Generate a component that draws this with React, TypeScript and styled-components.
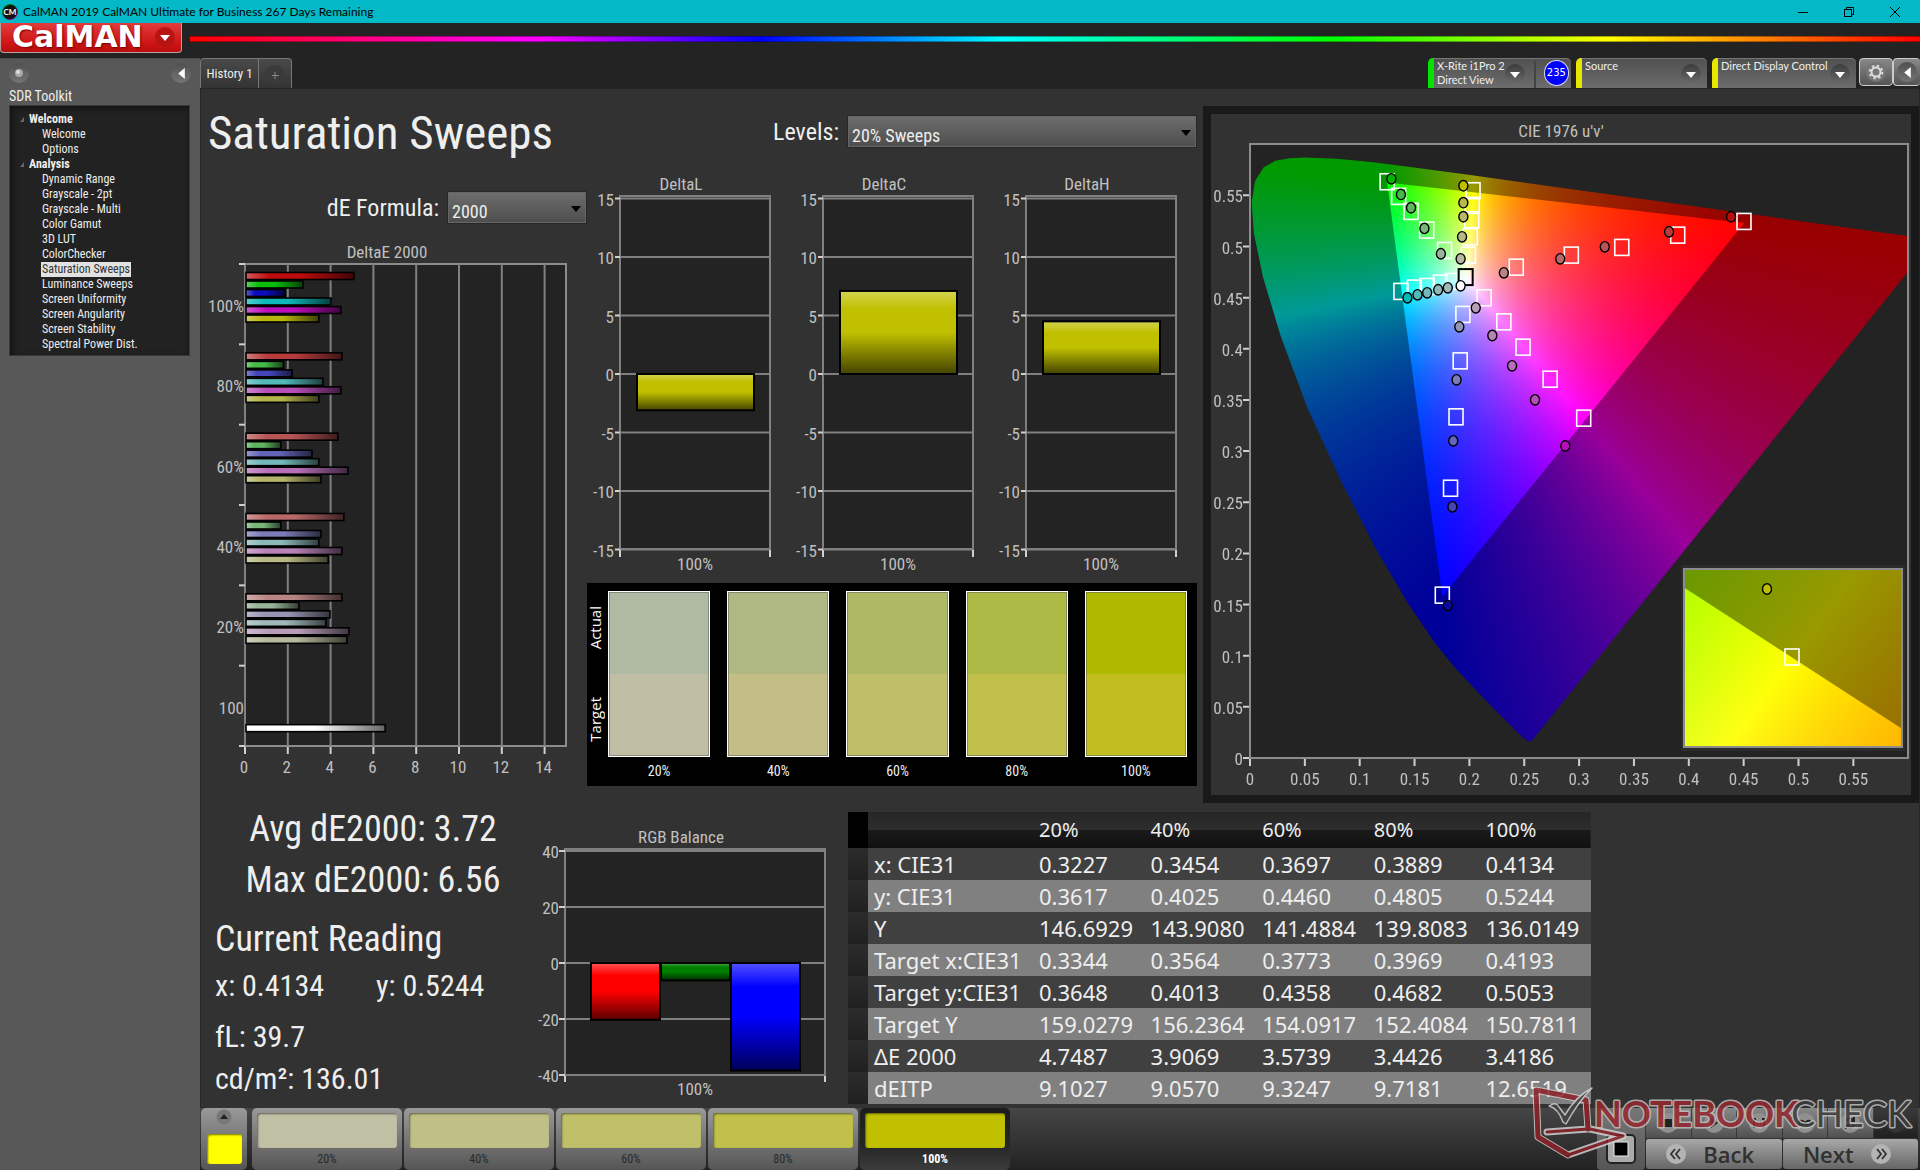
import React, { useEffect, useRef } from 'react';
import styled, { createGlobalStyle, css } from 'styled-components';

const narrow = `'Roboto Condensed', Roboto, 'Open Sans', sans-serif`;
const wide = `'Noto Sans', 'Open Sans', sans-serif`;
const lato = `Lato, 'Open Sans', sans-serif`;

const GlobalStyle = createGlobalStyle`
  *, *::before, *::after { box-sizing: border-box; }
  body { margin: 0; background: #232323; color: #eee; font-family: ${narrow}; }
  button, select { font: inherit; color: inherit; margin: 0; }
  h1, h2, ul, dl, dd, p { margin: 0; padding: 0; }
  ul { list-style: none; }
`;

/* ---------- shell ---------- */

const Shell = styled.div`
  display: flex;
  flex-direction: column;
  min-height: 100vh;
  position: relative;
  overflow: hidden;
`;

const TitleBar = styled.header`
  display: flex;
  align-items: center;
  gap: 5px;
  height: 23px;
  padding: 0 7px 0 2px;
  background: #03b8c7;
  color: #000;
  font: 12px/23px ${lato};
`;

const WindowButtons = styled.div`
  display: flex;
  margin-left: auto;
  gap: 10px;
`;

const WindowButton = styled.button`
  width: 36px;
  height: 22px;
  padding: 0;
  border: 0;
  background: none;
  display: grid;
  place-items: center;
`;

const Brand = styled.div`
  display: flex;
  align-items: center;
  gap: 8px;
  height: 35px;
  padding-bottom: 5px;
`;

const LogoButton = styled.button`
  display: flex;
  align-items: center;
  justify-content: space-between;
  width: 182px;
  height: 30px;
  padding: 0 6px 2px 11px;
  border: 1px solid #b9a0a0;
  border-top: 0;
  border-radius: 0 0 4px 4px;
  background: linear-gradient(#e23c3c, #cf1414 70%, #b80e0e);
  color: #fff;
  font: bold 30px/28px 'DejaVu Sans', sans-serif;
  text-shadow: 1px 1px 2px #700;
`;

const Badge = styled.span`
  display: grid;
  place-items: center;
  width: 20px;
  height: 20px;
  border-radius: 50%;
  background: #b81414;
`;

const Spectrum = styled.div`
  flex: 1;
  height: 6px;
  margin-top: 1px;
  border: 1px solid rgba(0, 0, 0, 0.35);
  border-width: 1px 0;
  background: linear-gradient(90deg, #f00 0%, #f0f 20%, #00f 33%, #0ff 47%, #0f0 66%, #ff0 82%, #f00 100%);
`;

const Columns = styled.div`
  display: flex;
  flex: 1;
`;

/* ---------- sidebar ---------- */

const Sidebar = styled.aside`
  width: 200px;
  flex: none;
  padding: 4px 9px 0;
  background: #585858;
  border-top: 1px solid #4a4a4a;
`;

const SidebarTop = styled.div`
  display: flex;
  justify-content: space-between;
  height: 22px;
`;

const RoundButton = styled.button<{ $size?: number; $dark?: boolean }>`
  width: ${p => p.$size ?? 20}px;
  height: ${p => p.$size ?? 20}px;
  flex: none;
  padding: 0;
  border: 0;
  border-radius: 50%;
  display: grid;
  place-items: center;
  background: ${p => (p.$dark ? 'linear-gradient(#3c3c3c, #6a6a6a)' : 'linear-gradient(#505050, #757575)')};
`;

const SidebarTitle = styled.h2`
  font: 14px/18px ${narrow};
  margin: 2px 0 0;
`;

const Tree = styled.nav`
  width: 181px;
  height: 251px;
  padding: 6px 0 0 10px;
  background: #222;
  border: 1px solid #3a3a3a;
  box-shadow: inset 2px 2px 6px #111;
  font-size: 12px;
  line-height: 15px;
`;

const TreeGroup = styled.div`
  font-weight: bold;
  display: flex;
  align-items: center;
  gap: 5px;
`;

const TreeItem = styled.a<{ $active?: boolean }>`
  display: block;
  width: fit-content;
  margin-left: 21px;
  padding: 0 1px;
  color: #eee;
  text-decoration: none;
  ${p => p.$active && css`
    background: #e2e2e2;
    color: #333;
  `}
`;

/* ---------- workspace ---------- */

const Work = styled.div`
  flex: 1;
  min-width: 0;
  display: flex;
  flex-direction: column;
`;

const TabBar = styled.div`
  display: flex;
  align-items: flex-end;
  height: 30px;
`;

const Tabs = styled.div`
  display: flex;
  height: 30px;
  border: 1px solid #777;
  border-bottom: 0;
  border-radius: 4px 4px 0 0;
  background: linear-gradient(#4a4a4a, #333);
`;

const Tab = styled.button`
  width: 58px;
  padding: 0;
  border: 0;
  border-right: 1px solid #777;
  background: none;
  font-size: 13px;
  white-space: nowrap;
`;

const AddTab = styled.button`
  width: 32px;
  padding: 2px 0 0;
  border: 0;
  background: none;
  display: grid;
  place-items: center;
`;

const Devices = styled.div`
  display: flex;
  margin-left: auto;
  gap: 5px;
  height: 30px;
`;

const Device = styled.div<{ $width: number; $accent: string }>`
  display: flex;
  align-items: flex-start;
  width: ${p => p.$width}px;
  padding: 1px 6px 0 3px;
  border-left: 6px solid ${p => p.$accent};
  border-radius: 5px 5px 0 0;
  background: linear-gradient(#505050, #6c6c6c);
  box-shadow: inset 0 1px 0 #777;
  font: 11px/14px ${lato};
`;

const DeviceName = styled.span`
  flex: 1;
  white-space: pre;
`;

const DeviceArrow = styled(RoundButton)`
  margin-top: 5px;
`;

const Level = styled.span`
  display: grid;
  place-items: center;
  width: 26px;
  height: 26px;
  margin: 1px -4px 0 8px;
  border-radius: 50%;
  border: 1px solid #dde;
  background: #00f;
  font: 10px/12px 'DejaVu Sans', sans-serif;
  color: #fff;
`;

const Divider = styled.span`
  width: 2px;
  height: 27px;
  margin: 2px 0 0 9px;
  background: #444;
`;

const ToolButtons = styled.div`
  display: flex;
  margin-left: -2px;
`;

const ToolButton = styled.button<{ $width: number }>`
  width: ${p => p.$width}px;
  height: 28px;
  padding: 0;
  border: 1px solid #ccc;
  border-right-width: ${p => (p.$width < 30 ? 0 : 1)}px;
  border-radius: 4px;
  background: linear-gradient(#888, #555);
  display: grid;
  place-items: center;
`;

const Page = styled.main`
  flex: 1;
  padding: 0 0 3px;
  background: #323232;
  border: 1px solid #262626;
  border-bottom: 0;
`;

const TopGrid = styled.div`
  display: grid;
  grid-template-columns: 386fr 616fr 716fr;
  align-items: start;
`;

const Column = styled.section`
  min-width: 0;
`;

const Heading = styled.h1`
  font: 47px/60px ${narrow};
  padding: 14px 0 0 7px;
  white-space: nowrap;
`;

const Field = styled.div<{ $top: number }>`
  display: flex;
  justify-content: flex-end;
  align-items: center;
  gap: 8px;
  height: 33px;
  margin-top: ${p => p.$top}px;
  font-size: 24px;
`;

const SelectBox = styled.div<{ $width: number }>`
  position: relative;
  width: ${p => p.$width}px;
  height: 33px;
  svg {
    position: absolute;
    right: 6px;
    top: 12px;
    pointer-events: none;
  }
`;

const Select = styled.select`
  appearance: none;
  width: 100%;
  height: 100%;
  padding: 9px 24px 0 4px;
  border: 1px solid #282828;
  border-radius: 0;
  background: linear-gradient(#6e6e6e, #4d4d4d);
  box-shadow: inset 0 0 0 1px #666;
  font-size: 18px;
  line-height: 22px;
`;

const Drawing = styled.svg`
  display: block;
  width: 100%;
  height: auto;
  font-family: ${narrow};
  font-size: 17px;
  fill: #c0c0c0;
`;

const ChartGap = styled.div`
  padding-top: 12px;
`;

const MidColumn = styled(Column)`
  padding-right: 6px;
`;

const DeltaRow = styled.div`
  display: grid;
  grid-template-columns: repeat(3, 1fr);
  gap: 14px;
  padding: 22px 15px 8px 0;
`;

const Swatches = styled.div`
  display: flex;
  gap: 6px;
  height: 203px;
  padding: 8px 10px 0 1px;
  background: #000;
`;

const SideLabels = styled.div`
  display: flex;
  flex-direction: column;
  justify-content: space-between;
  align-items: center;
  width: 14px;
  height: 166px;
  padding: 15px 0;
  font: 15px/14px 'Open Sans', sans-serif;
  color: #fff;
`;

const SideLabel = styled.span`
  writing-mode: vertical-rl;
  transform: rotate(180deg);
`;

const SwatchList = styled.div`
  flex: 1;
  display: grid;
  grid-template-columns: repeat(5, 1fr);
  gap: 17px;
`;

const Swatch = styled.figure`
  margin: 0;
  text-align: center;
  font-size: 14px;
  line-height: 28px;
`;

const SwatchColor = styled.div<{ $actual: string; $target: string }>`
  height: 166px;
  border: 1px solid #fff;
  background: linear-gradient(${p => p.$actual} 50%, ${p => p.$target} 50%);
  box-shadow: inset 0 0 0 1px rgba(90, 90, 90, 0.5);
`;

const CiePanel = styled(Column)`
  margin-top: 17px;
  border: 8px solid #191919;
`;

/* ---------- bottom of the page ---------- */

const BottomRow = styled.div`
  display: flex;
  align-items: flex-start;
  padding-top: 1px;
`;

const Readings = styled.section`
  flex: none;
  width: 330px;
  padding-left: 14px;
`;

const BigLine = styled.p`
  font-size: 36px;
  line-height: 51px;
  text-align: center;
`;

const Current = styled.h2`
  margin-top: 8px;
  font: 36px/51px ${narrow};
`;

const Values = styled.div<{ $top?: number }>`
  display: grid;
  grid-template-columns: 161px 1fr;
  margin-top: ${p => p.$top ?? 0}px;
  font-size: 30px;
  line-height: 42px;
  white-space: nowrap;
`;

const Balance = styled.section`
  flex: none;
  width: 310px;
  padding-top: 20px;
`;

const DataTable = styled.table`
  flex: none;
  width: 743px;
  margin: 8px 0 0 7px;
  border-collapse: collapse;
  table-layout: fixed;
  font: 22px/32px ${wide};
  color: #eee;
  th, td {
    height: 32px;
    padding: 0 0 0 6px;
    text-align: left;
    font-weight: normal;
    white-space: nowrap;
  }
  thead th {
    font-size: 20px;
  }
`;

const StubCol = styled.col`
  width: 20px;
`;

const NameCol = styled.col`
  width: 165px;
`;

const HeadRow = styled.tr`
  height: 36px;
  background: linear-gradient(#262626, #2e2e2e 50%, #1a1a1a 50%, #101010);
`;

const Stub = styled.td<{ $head?: boolean }>`
  background: ${p => (p.$head ? '#000' : 'linear-gradient(#2c2c2c, #202020)')};
`;

const DataRow = styled.tr<{ $light: boolean }>`
  background: ${p => (p.$light ? '#808080' : '#404040')};
`;

const Footer = styled.footer`
  display: flex;
  height: 62px;
  background: linear-gradient(#464646, #222);
`;

const Corner = styled.button`
  display: flex;
  flex-direction: column;
  align-items: center;
  justify-content: space-between;
  width: 46px;
  margin: 0 5px 0 1px;
  padding: 1px 5px 6px;
  border: 0;
  border-radius: 5px;
  background: linear-gradient(#999, #555);
`;

const CornerColor = styled.span`
  width: 35px;
  height: 30px;
  border-radius: 3px;
  background: #ff0;
  box-shadow: inset 1px 1px 2px #770;
`;

const Steps = styled.div`
  display: flex;
  gap: 2px;
`;

const Step = styled.button<{ $active?: boolean }>`
  width: 150px;
  padding: 5px 5px 0;
  border: 0;
  border-radius: 5px;
  background: ${p => (p.$active ? 'linear-gradient(#1c1c1c, #262626 60%, #3c3c3c)' : 'linear-gradient(#999, #555)')};
  color: ${p => (p.$active ? '#fff' : '#2a2a2a')};
  font-size: 12px;
  line-height: 22px;
  font-weight: ${p => (p.$active ? 'bold' : 'normal')};
  display: flex;
  flex-direction: column;
`;

const StepColor = styled.span<{ $color: string }>`
  width: 100%;
  height: 37px;
  border-radius: 3px;
  background: ${p => p.$color};
  box-shadow: inset 1px 1px 2px rgba(0, 0, 0, 0.5);
`;

const StepName = styled.span`
  align-self: center;
`;

const Transport = styled.div`
  display: grid;
  grid-template-columns: 48px 272px;
  gap: 1px;
  margin: 0 2px 0 auto;
`;

const Target = styled.button`
  padding: 20px 0 0;
  border: 0;
  border-radius: 4px;
  background: linear-gradient(#777, #555);
  display: grid;
  place-items: center;
`;

const TransportRows = styled.div`
  display: grid;
  grid-template-rows: 30px 30px;
  gap: 1px;
`;

const IconRow = styled.div`
  display: grid;
  grid-template-columns: repeat(6, 1fr);
  gap: 1px;
`;

const IconCell = styled.button<{ $off?: boolean }>`
  padding: 0;
  border: 0;
  background: ${p => (p.$off ? 'linear-gradient(#3a3a3a, #202020)' : 'linear-gradient(#888, #505050)')};
  display: grid;
  place-items: center;
`;

const NavRow = styled.div`
  display: grid;
  grid-template-columns: 1fr 1fr;
  gap: 1px;
`;

const NavButton = styled.button`
  display: flex;
  align-items: center;
  justify-content: center;
  gap: 17px;
  padding: 0 7px 0 0;
  border: 0;
  border-radius: 3px;
  background: linear-gradient(#a8a8a8, #666);
  color: #303030;
  font: 600 22px/30px 'Open Sans', sans-serif;
`;

const Watermark = styled.svg`
  position: absolute;
  right: 4px;
  bottom: 8px;
  pointer-events: none;
  font-family: Lato, sans-serif;
`;

/* ---------- small icons ---------- */

const Triangle = ({ dir, size = 10, color = '#fff' }: { dir: 'down' | 'left'; size?: number; color?: string }) => {
  const shapes = { down: '0,3 10,3 5,9', left: '8,0 8,10 2,5' };
  return (
    <svg width={size} height={size} viewBox="0 0 10 10">
      <polygon points={shapes[dir]} fill={color} />
    </svg>
  );
};

const AppMark = () => (
  <svg width="16" height="16" viewBox="0 0 16 16">
    <defs>
      <linearGradient id="ring" x1="0" y1="0" x2="1" y2="1">
        <stop offset="0" stopColor="#0c0" />
        <stop offset="0.5" stopColor="#222" />
        <stop offset="1" stopColor="#c0c" />
      </linearGradient>
    </defs>
    <circle cx="8" cy="8" r="7.5" fill="#111" stroke="url(#ring)" />
    <text x="8" y="11" textAnchor="middle" fontSize="8" fontWeight="bold" fill="#fff" fontFamily="Lato, sans-serif">CM</text>
  </svg>
);

const Gear = () => (
  <svg width="22" height="22" viewBox="0 0 22 22">
    <circle cx="11" cy="11" r="10" fill="#777" />
    <circle cx="11" cy="11" r="4.5" fill="none" stroke="#ddd" strokeWidth="2" />
    <circle cx="11" cy="11" r="6.3" fill="none" stroke="#ddd" strokeWidth="2" strokeDasharray="2.4 2.55" />
  </svg>
);

const TransportIcon = ({ kind }: { kind: number }) => (
  <svg width="20" height="20" viewBox="0 0 20 20" fill="#222" stroke="none">
    <circle cx="10" cy="10" r="10" fill={kind === 5 ? '#333' : '#909090'} />
    {kind === 0 && <rect x="6" y="6" width="8" height="8" />}
    {kind === 1 && <polygon points="7,5 14,10 7,15" />}
    {kind === 2 && <path d="M4 5h3v2H6v6h1v2H4zM16 5h-3v2h1v6h-1v2h3zM8 8h1v4H8zM11 8h1v4h-1z" />}
    {kind === 3 && <path d="M10 10c-2-3-6-3-6 0s4 3 6 0 6-3 6 0-4 3-6 0z" fill="none" stroke="#222" strokeWidth="2" />}
    {kind === 4 && <path d="M14 8a4.500 4.500 0 0 0-8 0M6 12a4.500 4.500 0 0 0 8 0M14 4v4h-4M6 16v-4h4" fill="none" stroke="#222" strokeWidth="2" />}
  </svg>
);

const Chevrons = ({ flip }: { flip?: boolean }) => (
  <svg width="20" height="20" viewBox="0 0 20 20">
    <circle cx="10" cy="10" r="10" fill="#b4b4b4" />
    <path
      d={flip ? 'M6 5l4 5-4 5M11 5l4 5-4 5' : 'M9 5l-4 5 4 5M14 5l-4 5 4 5'}
      fill="none" stroke="#333" strokeWidth="1.8"
    />
  </svg>
);

/* ---------- charts ---------- */

const mix = (hex: string, to: number, t: number) =>
  '#' + [1, 3, 5].map(i => {
    const v = parseInt(hex.slice(i, i + 2), 16);
    return Math.round(v + (to - v) * t).toString(16).padStart(2, '0');
  }).join('');

const Shade = ({ id, color, vertical }: { id: string; color: string; vertical?: boolean }) => (
  <linearGradient id={id} x1="0" y1="0" x2={vertical ? 0 : 1} y2={vertical ? 1 : 0}>
    <stop offset="0" stopColor={mix(color, 255, 0.32)} />
    <stop offset="0.22" stopColor={color} />
    <stop offset="0.5" stopColor={color} />
    <stop offset="1" stopColor={mix(color, 0, 0.65)} />
  </linearGradient>
);

const sweeps = [
  { name: '100%', values: [5.09, 2.71, 1.87, 4.02, 4.48, 3.45], colors: ['#be0c0c', '#0cbe0c', '#0c0cbe', '#0cb8b8', '#bc0cbc', '#b8b80c'] },
  { name: '80%', values: [4.53, 1.8, 2.2, 3.64, 4.48, 3.45], colors: ['#b93c3c', '#45b945', '#4545b9', '#52b8b8', '#b84eb8', '#b4b44c'] },
  { name: '60%', values: [4.34, 1.67, 3.13, 3.45, 4.81, 3.55], colors: ['#b85454', '#60b560', '#6464b8', '#72b8b8', '#b86eb8', '#b4b46a'] },
  { name: '40%', values: [4.62, 1.67, 3.55, 3.45, 4.53, 3.89], colors: ['#b86868', '#7ab67a', '#7c7cb8', '#8cb8b8', '#b882b8', '#b8b884'] },
  { name: '20%', values: [4.53, 2.52, 3.97, 3.78, 4.86, 4.76], colors: ['#b88484', '#98b498', '#9696b4', '#a0b8b8', '#b89cb8', '#b8b89c'] },
];

const DeltaEChart = () => {
  const left = 44, right = 365, top = 28, bottom = 510, unit = 21.4, slot = (bottom - top) / 6;
  return (
    <Drawing viewBox="0 0 386 556" role="img" aria-label="DeltaE 2000">
      <defs>
        {sweeps.flatMap((s, i) => s.colors.map((c, j) => <Shade key={`${i}${j}`} id={`e${i}${j}`} color={c} />))}
        <linearGradient id="white-bar">
          <stop offset="0.5" stopColor="#fff" />
          <stop offset="1" stopColor="#666" />
        </linearGradient>
      </defs>
      <text x="186" y="22" textAnchor="middle">DeltaE 2000</text>
      <rect x={left} y={top} width={right - left} height={bottom - top} fill="#232323" stroke="#8c8c8c" strokeWidth="2" />
      {[0, 2, 4, 6, 8, 10, 12, 14].map(v => (
        <g key={v}>
          <line x1={left + v * unit} x2={left + v * unit} y1={top} y2={bottom} stroke="#808080" strokeWidth="2" />
          <line x1={left + v * unit} x2={left + v * unit} y1={bottom + 1} y2={bottom + 8} stroke="#d0d0d0" strokeWidth="2" />
          <text x={left - 1 + v * unit} y="537" textAnchor="middle">{v}</text>
        </g>
      ))}
      {[0, 1, 2, 3, 4, 5, 6].map(i => (
        <line key={i} x1={left - 6} x2={left} y1={top + i * slot} y2={top + i * slot} stroke="#d0d0d0" strokeWidth="2" />
      ))}
      {sweeps.map((s, i) => (
        <g key={s.name}>
          <text x={left - 1} y={top + i * slot + 48} textAnchor="end">{s.name}</text>
          {s.values.map((v, j) => (
            <rect
              key={j} x={left + 1} y={top + i * slot + 8.5 + j * 8.5} width={v * unit - 1} height="7"
              fill={`url(#e${i}${j})`} stroke="#000" strokeWidth="1.6"
            />
          ))}
        </g>
      ))}
      <text x={left - 1} y={top + 5 * slot + 48} textAnchor="end">100</text>
      <rect x={left + 1} y={top + 5 * slot + 59} width={6.5 * unit} height="7" fill="url(#white-bar)" stroke="#000" strokeWidth="1.6" />
    </Drawing>
  );
};

const DeltaChart = ({ name, value }: { name: string; value: number }) => {
  const y = (v: number) => 204 - v * 11.7;
  return (
    <Drawing viewBox="0 0 189 405" role="img" aria-label={name}>
      <defs><Shade id={name} color="#c0c000" vertical /></defs>
      <text x="94" y="20" textAnchor="middle">{name}</text>
      <rect x="33" y="26" width="150" height="353" fill="#232323" stroke="#808080" strokeWidth="2" />
      {[15, 10, 5, 0, -5, -10, -15].map(v => (
        <g key={v}>
          <line x1="33" x2="183" y1={y(v)} y2={y(v)} stroke="#808080" strokeWidth="2" />
          <line x1="28" x2="33" y1={y(v)} y2={y(v)} stroke="#d0d0d0" strokeWidth="2" />
          <text x="27" y={y(v) + 7} textAnchor="end">{v}</text>
        </g>
      ))}
      <path d="M33 380v7M183 380v7" stroke="#d0d0d0" strokeWidth="2" />
      <rect x="50" y={y(Math.max(value, 0))} width="117" height={Math.abs(value) * 11.7} fill={`url(#${name})`} stroke="#000" strokeWidth="2" />
      <text x="108" y="400" textAnchor="middle">100%</text>
    </Drawing>
  );
};

const BalanceChart = () => {
  const y = (v: number) => 139 - v * 2.8;
  const bars = [['#ff0000', 20.3], ['#008000', 6.2], ['#0000ff', 38.4]] as const;
  return (
    <Drawing viewBox="0 0 310 280" role="img" aria-label="RGB Balance">
      <defs>{bars.map(([c], i) => <Shade key={c} id={`b${i}`} color={c} vertical />)}</defs>
      <text x="150" y="19" textAnchor="middle">RGB Balance</text>
      <rect x="34" y="25" width="260" height="226" fill="#232323" stroke="#808080" strokeWidth="2" />
      {[40, 20, 0, -20, -40].map(v => (
        <g key={v}>
          <line x1="34" x2="294" y1={y(v)} y2={y(v)} stroke="#808080" strokeWidth="2" />
          <line x1="28" x2="34" y1={y(v)} y2={y(v)} stroke="#d0d0d0" strokeWidth="2" />
          <text x="28" y={y(v) + 7} textAnchor="end">{v}</text>
        </g>
      ))}
      <path d="M34 252v6M294 252v6" stroke="#d0d0d0" strokeWidth="2" />
      {bars.map(([c, v], i) => (
        <rect key={c} x={60 + i * 70} y={y(0)} width="69" height={v * 2.8} fill={`url(#b${i})`} stroke="#000" strokeWidth="2" />
      ))}
      <text x="164" y="271" textAnchor="middle">100%</text>
    </Drawing>
  );
};

/* CIE 1931 xy of the spectral locus, 380 to 700 nm */
const locusXY = [
  [0.1741, 0.005], [0.1714, 0.0051], [0.1689, 0.0069], [0.1644, 0.0109], [0.1566, 0.0177], [0.144, 0.0297],
  [0.1355, 0.0399], [0.1241, 0.0578], [0.1096, 0.0868], [0.0913, 0.1327], [0.0687, 0.2007], [0.0454, 0.295],
  [0.0235, 0.4127], [0.0082, 0.5384], [0.0039, 0.6548], [0.0139, 0.7502], [0.0389, 0.812], [0.0743, 0.8338],
  [0.1142, 0.8262], [0.1547, 0.8059], [0.2296, 0.7543], [0.3016, 0.6923], [0.3731, 0.6245], [0.4441, 0.5547],
  [0.5125, 0.4866], [0.5752, 0.4242], [0.627, 0.3725], [0.6658, 0.334], [0.6915, 0.3083], [0.719, 0.2809], [0.7347, 0.2653],
];
const rec709XY = [[0.64, 0.33], [0.3, 0.6], [0.15, 0.06]];

const toUV = ([x, y]: number[]) => {
  const d = -2 * x + 12 * y + 3;
  return [(4 * x) / d, (9 * y) / d];
};
const toXY = ([u, v]: number[]) => {
  const d = 6 * u - 16 * v + 12;
  return [(9 * u) / d, (4 * v) / d];
};

/* brightest linear RGB colour with the given xy chromaticity */
const colorAt = ([x, y]: number[]) => {
  const yy = Math.max(y, 0.0001);
  const X = x / yy;
  const Z = (1 - x - yy) / yy;
  const rgb = [
    3.2406 * X - 1.5372 - 0.4986 * Z,
    -0.9689 * X + 1.8758 + 0.0415 * Z,
    0.0557 * X - 0.204 + 1.057 * Z,
  ].map(c => Math.max(c, 0));
  const m = Math.max(...rgb) || 1;
  return rgb.map(c => (255 * c) / m);
};

type View = { space: 'uv' | 'xy'; a0: number; a1: number; b0: number; b1: number };

const GamutCanvas = styled.canvas`
  display: block;
  width: 100%;
  height: 100%;
`;

const Gamut = ({ width, height, view }: { width: number; height: number; view: View }) => {
  const ref = useRef<HTMLCanvasElement>(null);
  useEffect(() => {
    const ctx = ref.current!.getContext('2d')!;
    const { space, a0, a1, b0, b1 } = view;
    const layer = (gain: number) => {
      const c = document.createElement('canvas');
      c.width = width;
      c.height = height;
      const g = c.getContext('2d')!;
      const img = g.createImageData(width, height);
      for (let j = 0, k = 0; j < height; j++) {
        const b = b1 - ((j + 0.5) / height) * (b1 - b0);
        for (let i = 0; i < width; i++, k += 4) {
          const at = [a0 + ((i + 0.5) / width) * (a1 - a0), b];
          const rgb = colorAt(space === 'uv' ? toXY(at) : at);
          img.data[k] = rgb[0] * gain;
          img.data[k + 1] = rgb[1] * gain;
          img.data[k + 2] = rgb[2] * gain;
          img.data[k + 3] = 255;
        }
      }
      g.putImageData(img, 0, 0);
      return c;
    };
    const fill = (outline: number[][], gain: number) => {
      ctx.save();
      ctx.beginPath();
      outline
        .map(p => (space === 'uv' ? toUV(p) : p))
        .forEach(([a, b]) => ctx.lineTo(((a - a0) / (a1 - a0)) * width, ((b1 - b) / (b1 - b0)) * height));
      ctx.closePath();
      ctx.clip();
      ctx.drawImage(layer(gain), 0, 0);
      ctx.restore();
    };
    ctx.clearRect(0, 0, width, height);
    fill(locusXY, 0.6);
    fill(rec709XY, 1);
  }, [width, height, view]);
  return <GamutCanvas ref={ref} width={width} height={height} />;
};

const targets = [
  [0.125, 0.5633], [0.1355, 0.549], [0.1468, 0.5343], [0.1611, 0.516], [0.1774, 0.4961],
  [0.2033, 0.5545], [0.2025, 0.5402], [0.2021, 0.5261], [0.2008, 0.5095], [0.1991, 0.4916],
  [0.1376, 0.4561], [0.1498, 0.4593], [0.1615, 0.4609], [0.1736, 0.4642], [0.1849, 0.4658],
  [0.4503, 0.5245], [0.3899, 0.5111], [0.3389, 0.4991], [0.2929, 0.4916], [0.2427, 0.4798],
  [0.2134, 0.4499], [0.2314, 0.4264], [0.2489, 0.4016], [0.2736, 0.3703], [0.3042, 0.3322],
  [0.1941, 0.4336], [0.1916, 0.3882], [0.1878, 0.3335], [0.1828, 0.2637], [0.1753, 0.1592],
];

const readings: [number, number, string][] = [
  [0.1289, 0.5662, '#00b400'], [0.1376, 0.5509, '#45b945'], [0.1468, 0.5379, '#60b560'], [0.159, 0.5177, '#7ab67a'], [0.174, 0.4929, '#98b498'],
  [0.1945, 0.5594, '#c0c000'], [0.1945, 0.5428, '#b8b84c'], [0.1945, 0.5291, '#b8b86a'], [0.1933, 0.5095, '#b8b884'], [0.192, 0.488, '#b8b89c'],
  [0.1435, 0.4499, '#00b8b8'], [0.1527, 0.4528, '#52b8b8'], [0.1615, 0.4547, '#72b8b8'], [0.1715, 0.4577, '#8cb8b8'], [0.1803, 0.4596, '#a0b8b8'],
  [0.4385, 0.5291, '#be0c0c'], [0.382, 0.5144, '#b93c3c'], [0.3234, 0.4997, '#b85454'], [0.2828, 0.488, '#b86868'], [0.2314, 0.4743, '#b88484'],
  [0.2058, 0.4401, '#b89cb8'], [0.2209, 0.413, '#b882b8'], [0.2389, 0.3834, '#b86eb8'], [0.2598, 0.3501, '#b84eb8'], [0.2874, 0.3051, '#bc0cbc'],
  [0.1908, 0.4215, '#9696b4'], [0.1883, 0.3697, '#7c7cb8'], [0.1853, 0.31, '#6464b8'], [0.1845, 0.2455, '#4545b9'], [0.1803, 0.149, '#0c0c9c'],
  [0.192, 0.4616, '#ffffff'],
];

const fullView: View = { space: 'uv', a0: 0, a1: 0.6, b0: 0, b1: 0.6 };
const insetView: View = { space: 'xy', a0: 0.3943, a1: 0.4443, b0: 0.4803, b1: 0.5303 };

const CieChart = () => {
  const x = (u: number) => 39 + u * 1097;
  const y = (v: number) => 644 - v * 1023;
  const steps = Array.from({ length: 12 }, (_, i) => i * 5);
  const label = (n: number) => String(n / 100);
  return (
    <Drawing viewBox="0 0 700 681" role="img" aria-label="CIE 1976 u'v'">
      <text x="350" y="23" textAnchor="middle">CIE 1976 u'v'</text>
      <rect x="39" y="30" width="658" height="614" fill="#232323" />
      <foreignObject x="39" y="30" width="658" height="614">
        <Gamut width={658} height={614} view={fullView} />
      </foreignObject>
      <rect x="39" y="30" width="658" height="614" fill="none" stroke="#8c8c8c" strokeWidth="2" />
      {steps.map(n => (
        <g key={n}>
          <path d={`M${x(n / 100)} 645v7M32 ${y(n / 100)}h6`} stroke="#d0d0d0" strokeWidth="2" />
          <text x={x(n / 100)} y="671" textAnchor="middle">{label(n)}</text>
          <text x="32" y={y(n / 100) + 7} textAnchor="end">{label(n)}</text>
        </g>
      ))}
      {targets.map(([u, v], i) => (
        <rect key={i} x={x(u) - 7} y={y(v) - 8} width="14" height="16" fill="none" stroke="#fff" strokeWidth="1.6" />
      ))}
      <rect x={x(0.1966) - 7} y={y(0.4701) - 8} width="14" height="16" fill="none" stroke="#000" strokeWidth="2" />
      {readings.map(([u, v, c], i) => (
        <ellipse key={i} cx={x(u)} cy={y(v)} rx="4.5" ry="5.2" fill={c} stroke="#000" strokeWidth="1.4" />
      ))}
      <rect x="470" y="451" width="224" height="186" fill="#2c2c2c" />
      <foreignObject x="473" y="455" width="218" height="178">
        <Gamut width={218} height={178} view={insetView} />
      </foreignObject>
      <rect x="473" y="455" width="218" height="178" fill="none" stroke="#8c8c8c" strokeWidth="2" />
      <rect x="574" y="535" width="14" height="16" fill="none" stroke="#fff" strokeWidth="1.6" />
      <ellipse cx="556" cy="475" rx="4.5" ry="5.2" fill="#c0c000" stroke="#000" strokeWidth="1.4" />
    </Drawing>
  );
};

/* ---------- data ---------- */

const tree = [
  { group: 'Welcome', items: ['Welcome', 'Options'] },
  {
    group: 'Analysis',
    items: [
      'Dynamic Range', 'Grayscale - 2pt', 'Grayscale - Multi', 'Color Gamut', '3D LUT', 'ColorChecker',
      'Saturation Sweeps', 'Luminance Sweeps', 'Screen Uniformity', 'Screen Angularity', 'Screen Stability', 'Spectral Power Dist.',
    ],
  },
];

const levels = ['20%', '40%', '60%', '80%', '100%'];
const actual = ['#b0b9a1', '#b0b984', '#aeb965', '#adba45', '#afb900'];
const target = ['#c0bfa5', '#c2be86', '#c0be69', '#c0c04b', '#c2be22'];
const stepColors = ['#c0c0a5', '#c0c086', '#c0c069', '#c0c04b', '#c0c000'];

const table: [string, string[]][] = [
  ['x: CIE31', ['0.3227', '0.3454', '0.3697', '0.3889', '0.4134']],
  ['y: CIE31', ['0.3617', '0.4025', '0.4460', '0.4805', '0.5244']],
  ['Y', ['146.6929', '143.9080', '141.4884', '139.8083', '136.0149']],
  ['Target x:CIE31', ['0.3344', '0.3564', '0.3773', '0.3969', '0.4193']],
  ['Target y:CIE31', ['0.3648', '0.4013', '0.4358', '0.4682', '0.5053']],
  ['Target Y', ['159.0279', '156.2364', '154.0917', '152.4084', '150.7811']],
  ['ΔE 2000', ['4.7487', '3.9069', '3.5739', '3.4426', '3.4186']],
  ['dEITP', ['9.1027', '9.0570', '9.3247', '9.7181', '12.6519']],
];

/* ---------- app ---------- */

export default function App() {
  return (
    <Shell>
      <GlobalStyle />
      <TitleBar>
        <AppMark />
        <span>CalMAN 2019 CalMAN Ultimate for Business 267 Days Remaining</span>
        <WindowButtons>
          <WindowButton aria-label="Minimize"><svg width="12" height="12"><path d="M1 6.500h10" stroke="#000" /></svg></WindowButton>
          <WindowButton aria-label="Restore">
            <svg width="12" height="12" fill="none" stroke="#000"><rect x="1.5" y="3.5" width="7" height="7" /><path d="M3.500 3.500v-2h7v7h-2" /></svg>
          </WindowButton>
          <WindowButton aria-label="Close"><svg width="12" height="12"><path d="M1 1l10 10M11 1L1 11" stroke="#000" /></svg></WindowButton>
        </WindowButtons>
      </TitleBar>
      <Brand>
        <LogoButton>CalMAN<Badge><Triangle dir="down" /></Badge></LogoButton>
        <Spectrum />
      </Brand>
      <Columns>
        <Sidebar>
          <SidebarTop>
            <RoundButton aria-label="Pin"><svg width="10" height="10"><circle cx="5" cy="5" r="4" fill="#aaa" /><circle cx="4" cy="4" r="2" fill="#ddd" /></svg></RoundButton>
            <RoundButton aria-label="Collapse"><Triangle dir="left" size={11} /></RoundButton>
          </SidebarTop>
          <SidebarTitle>SDR Toolkit</SidebarTitle>
          <Tree>
            {tree.map(g => (
              <div key={g.group}>
                <TreeGroup>
                  <svg width="4" height="5"><polygon points="4,0 4,5 0,5" fill="#666" /></svg>
                  {g.group}
                </TreeGroup>
                <ul>
                  {g.items.map(i => (
                    <li key={i}><TreeItem href="#" $active={i === 'Saturation Sweeps'}>{i}</TreeItem></li>
                  ))}
                </ul>
              </div>
            ))}
          </Tree>
        </Sidebar>
        <Work>
          <TabBar>
            <Tabs>
              <Tab>History 1</Tab>
              <AddTab aria-label="Add tab">
                <svg width="20" height="20"><circle cx="10" cy="10" r="10" fill="#3a3a3a" /><path d="M10 7v7M7 10.500h7" stroke="#888" /></svg>
              </AddTab>
            </Tabs>
            <Devices>
              <Device $width={143} $accent="#00e600">
                <DeviceName>{'X-Rite i1Pro 2\nDirect View'}</DeviceName>
                <DeviceArrow $dark aria-label="Meter menu"><Triangle dir="down" /></DeviceArrow>
                <Divider />
                <Level>235</Level>
              </Device>
              <Device $width={131} $accent="#e6e600">
                <DeviceName>Source</DeviceName>
                <DeviceArrow $dark aria-label="Source menu"><Triangle dir="down" /></DeviceArrow>
              </Device>
              <Device $width={144} $accent="#e6e600">
                <DeviceName>Direct Display Control</DeviceName>
                <DeviceArrow $dark aria-label="Display menu"><Triangle dir="down" /></DeviceArrow>
              </Device>
              <ToolButtons>
                <ToolButton $width={34} aria-label="Settings"><Gear /></ToolButton>
                <ToolButton $width={27} aria-label="Collapse panel"><RoundButton as="span"><Triangle dir="left" size={11} /></RoundButton></ToolButton>
              </ToolButtons>
            </Devices>
          </TabBar>
          <Page>
            <TopGrid>
              <Column>
                <Heading>Saturation Sweeps</Heading>
                <Field $top={28}>
                  <label htmlFor="formula">dE Formula:</label>
                  <SelectBox $width={140}>
                    <Select id="formula"><option>2000</option></Select>
                    <Triangle dir="down" color="#000" />
                  </SelectBox>
                </Field>
                <ChartGap><DeltaEChart /></ChartGap>
              </Column>
              <MidColumn>
                <Field $top={26}>
                  <label htmlFor="levels">Levels:</label>
                  <SelectBox $width={350}>
                    <Select id="levels"><option>20% Sweeps</option></Select>
                    <Triangle dir="down" color="#000" />
                  </SelectBox>
                </Field>
                <DeltaRow>
                  <DeltaChart name="DeltaL" value={-3.1} />
                  <DeltaChart name="DeltaC" value={7.1} />
                  <DeltaChart name="DeltaH" value={4.5} />
                </DeltaRow>
                <Swatches>
                  <SideLabels><SideLabel>Actual</SideLabel><SideLabel>Target</SideLabel></SideLabels>
                  <SwatchList>
                    {levels.map((l, i) => (
                      <Swatch key={l}>
                        <SwatchColor $actual={actual[i]} $target={target[i]} />
                        <figcaption>{l}</figcaption>
                      </Swatch>
                    ))}
                  </SwatchList>
                </Swatches>
              </MidColumn>
              <CiePanel><CieChart /></CiePanel>
            </TopGrid>
            <BottomRow>
              <Readings>
                <BigLine>Avg dE2000: 3.72</BigLine>
                <BigLine>Max dE2000: 6.56</BigLine>
                <Current>Current Reading</Current>
                <Values><span>x: 0.4134</span><span>y: 0.5244</span></Values>
                <Values $top={9}><span>fL: 39.7</span></Values>
                <Values><span>cd/m²: 136.01</span></Values>
              </Readings>
              <Balance><BalanceChart /></Balance>
              <DataTable>
                <colgroup>
                  <StubCol /><NameCol />
                  {levels.map(l => <col key={l} />)}
                </colgroup>
                <thead>
                  <HeadRow><Stub $head /><th />{levels.map(l => <th key={l} scope="col">{l}</th>)}</HeadRow>
                </thead>
                <tbody>
                  {table.map(([name, cells], i) => (
                    <DataRow key={name} $light={i % 2 === 1}>
                      <Stub /><th scope="row">{name}</th>
                      {cells.map(c => <td key={c}>{c}</td>)}
                    </DataRow>
                  ))}
                </tbody>
              </DataTable>
            </BottomRow>
          </Page>
          <Footer>
            <Corner aria-label="Pattern">
              <svg width="16" height="16"><circle cx="8" cy="8" r="7.5" fill="#777" /><polygon points="4,10 12,10 8,5" fill="#222" /></svg>
              <CornerColor />
            </Corner>
            <Steps>
              {levels.map((l, i) => (
                <Step key={l} $active={i === 4}>
                  <StepColor $color={stepColors[i]} />
                  <StepName>{l}</StepName>
                </Step>
              ))}
            </Steps>
            <Transport>
              <Target aria-label="Target">
                <svg width="32" height="32"><rect x="2" y="2" width="28" height="28" rx="4" fill="#aaa" stroke="#222" strokeWidth="2" /><rect x="9" y="9" width="14" height="14" fill="#000" stroke="#eee" strokeWidth="1" /></svg>
              </Target>
              <TransportRows>
                <IconRow>
                  {['Stop', 'Play', 'Range', 'Loop', 'Refresh', 'Record'].map((n, i) => (
                    <IconCell key={n} aria-label={n} $off={i === 5}><TransportIcon kind={i} /></IconCell>
                  ))}
                </IconRow>
                <NavRow>
                  <NavButton><Chevrons />Back</NavButton>
                  <NavButton>Next<Chevrons flip /></NavButton>
                </NavRow>
              </TransportRows>
            </Transport>
          </Footer>
        </Work>
      </Columns>
      <Watermark width="384" height="76" viewBox="0 0 384 76" aria-hidden="true">
        <g strokeLinejoin="round" strokeLinecap="round" fill="none" opacity="0.85">
          <path d="M15 46L56 43 54 14 4 4 6 51 36 69 91 50 58 43" stroke="#d0d0d0" strokeWidth="7" />
          <path d="M56 43L54 14 4 4 6 51 36 69" stroke="#8c2228" strokeWidth="5" />
          <path d="M15 46L56 43M58 43L91 50 36 69" stroke="#8c2228" strokeWidth="3" />
          <path d="M17 20Q24 15 27 21L33 29Q44 10 60 2 46 16 34 38L31 36Q26 22 17 20Z" fill="#444" stroke="#d0d0d0" strokeWidth="1.5" />
        </g>
        <g fontSize="36" strokeWidth="3" paintOrder="stroke" strokeLinejoin="round" stroke="#c0c0c0" opacity="0.85">
          <text x="62" y="41" fontWeight="bold" fill="#96282e">NOTEBOOK</text>
          <text x="379" y="41" textAnchor="end" fill="#3c3c3c">CHECK</text>
        </g>
      </Watermark>
    </Shell>
  );
}
